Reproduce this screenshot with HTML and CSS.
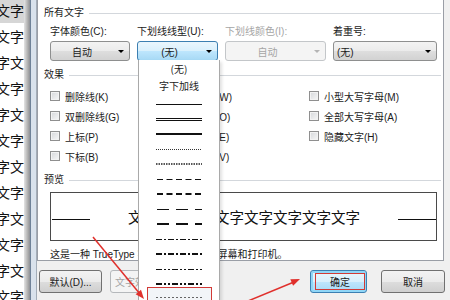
FILE: index.html
```html
<!DOCTYPE html>
<html lang="zh-CN">
<head>
  <meta charset="UTF-8" />
  <title>字体</title>
  <link rel="stylesheet" href="styles.css">
</head>
<body>
  <div class="screen">
    <div class="doc">
      <div class="row">文字文</div>
      <div class="row">文字文</div>
      <div class="row">字文字</div>
      <div class="row">文字文</div>
      <div class="row">字文字</div>
      <div class="row">文字文</div>
      <div class="row">字文字</div>
      <div class="row">文字文</div>
      <div class="row">字文字</div>
      <div class="row">文字文</div>
      <div class="row">字文字</div>
      <div class="row">文字文</div>
    </div>
    <div class="edge"></div>
    <div class="frame"></div>

    <div class="client">
      <div class="page">
        <div class="title">所有文字</div>
        <div class="fields">
          <div class="field">
            <label>字体颜色(C):</label>
            <div class="combo"><span class="val">自动</span><span class="arr"></span></div>
          </div>
          <div class="field">
            <label>下划线线型(U):</label>
            <div class="combo focus">
              <span class="val">(无)</span><span class="arr"></span>
              <!-- 展开的下拉列表 -->
              <ul class="dropdown">
                <li class="dd-text">(无)</li>
                <li class="dd-text">字下加线</li>
                <li class="dd-line"><svg width="46" height="4"><line x1="0" y1="2.5" x2="46" y2="2.5" stroke="#111" stroke-width="1"/></svg></li>
                <li class="dd-line"><svg width="46" height="4"><line x1="0" y1="1.5" x2="46" y2="1.5" stroke="#111" stroke-width="1"/><line x1="0" y1="3.5" x2="46" y2="3.5" stroke="#111" stroke-width="1"/></svg></li>
                <li class="dd-line"><svg width="46" height="4"><line x1="0" y1="2" x2="46" y2="2" stroke="#111" stroke-width="2"/></svg></li>
                <li class="dd-line"><svg width="46" height="4"><line x1="0" y1="2.5" x2="46" y2="2.5" stroke="#333" stroke-width="1" stroke-dasharray="1 1"/></svg></li>
                <li class="dd-line"><svg width="46" height="4"><line x1="0" y1="2" x2="46" y2="2" stroke="#222" stroke-width="1.6" stroke-dasharray="1.5 1"/></svg></li>
                <li class="dd-line"><svg width="46" height="4"><line x1="1" y1="2.5" x2="46" y2="2.5" stroke="#111" stroke-width="1" stroke-dasharray="6 3.5"/></svg></li>
                <li class="dd-line"><svg width="46" height="4"><line x1="1" y1="2" x2="46" y2="2" stroke="#111" stroke-width="2" stroke-dasharray="6 3.5"/></svg></li>
                <li class="dd-line"><svg width="46" height="4"><line x1="1" y1="2.5" x2="46" y2="2.5" stroke="#111" stroke-width="1" stroke-dasharray="12 7"/></svg></li>
                <li class="dd-line"><svg width="46" height="4"><line x1="1" y1="2" x2="46" y2="2" stroke="#111" stroke-width="2" stroke-dasharray="12 7"/></svg></li>
                <li class="dd-line"><svg width="46" height="4"><line x1="0" y1="2.5" x2="46" y2="2.5" stroke="#111" stroke-width="1" stroke-dasharray="6 2 2 2"/></svg></li>
                <li class="dd-line"><svg width="46" height="4"><line x1="0" y1="2" x2="46" y2="2" stroke="#111" stroke-width="2" stroke-dasharray="6 2 2 2"/></svg></li>
                <li class="dd-line"><svg width="46" height="4"><line x1="0" y1="2.5" x2="46" y2="2.5" stroke="#111" stroke-width="1" stroke-dasharray="6 2 2 2 2 2"/></svg></li>
                <li class="dd-line"><svg width="46" height="4"><line x1="0" y1="2" x2="46" y2="2" stroke="#111" stroke-width="2" stroke-dasharray="6 2 2 2 2 2"/></svg></li>
                <li class="dd-sel">
                  <div class="mark"><svg width="46" height="4"><line x1="0" y1="2.5" x2="46" y2="2.5" stroke="#666" stroke-width="1" stroke-dasharray="2 2"/></svg></div>
                </li>
              </ul>
            </div>
          </div>
          <div class="field disabled">
            <label>下划线颜色(I):</label>
            <div class="combo"><span class="val">自动</span><span class="arr"></span></div>
          </div>
          <div class="field">
            <label>着重号:</label>
            <div class="combo left"><span class="val">(无)</span><span class="arr"></span></div>
          </div>
        </div>

        <div class="title">效果</div>
        <div class="effects">
          <div class="check"><span class="box"></span>删除线(K)</div>
          <div class="check"><span class="box"></span>阴影(W)</div>
          <div class="check"><span class="box"></span>小型大写字母(M)</div>
          <div class="check"><span class="box"></span>双删除线(G)</div>
          <div class="check"><span class="box"></span>空心(O)</div>
          <div class="check"><span class="box"></span>全部大写字母(A)</div>
          <div class="check"><span class="box"></span>上标(P)</div>
          <div class="check"><span class="box"></span>阳文(E)</div>
          <div class="check"><span class="box"></span>隐藏文字(H)</div>
          <div class="check"><span class="box"></span>下标(B)</div>
          <div class="check"><span class="box"></span>阴文(V)</div>
        </div>

        <div class="title">预览</div>
        <div class="preview">
          <span class="pv-line"></span>
          <span class="pv-text">文字文字文字文字文字文字文字文字</span>
          <span class="pv-line"></span>
        </div>
        <p class="note">这是一种 TrueType 字体，同时适用于屏幕和打印机。</p>
      </div>

      <div class="buttons">
        <button class="btn wide">默认(D)...</button>
        <button class="btn off">文字效果(E)...</button>
        <button class="btn ok"><span class="mark-ok">确定</span></button>
        <button class="btn cancel">取消</button>
      </div>
    </div>
  </div>

  <!-- 标注箭头 -->
  <svg class="arrows" width="450" height="300">
    <line x1="93" y1="237" x2="140" y2="294" stroke="#e0302c" stroke-width="1.5"/>
    <polygon points="144,299 135.6,294.2 141,289.8" fill="#e0302c"/>
    <line x1="248" y1="301" x2="294" y2="282" stroke="#e0302c" stroke-width="1.5"/>
    <polygon points="300,279 293.1,285.7 290.3,279.3" fill="#e0302c"/>
  </svg>
</body>
</html>
```

FILE: styles.css
```css
body {
  margin: 0;
  width: 450px;
  height: 300px;
  overflow: hidden;
  position: relative;
  font-family: "Liberation Sans", "Noto Sans CJK SC", sans-serif;
  font-size: 10px;
  color: #1a1a1a;
  background: #fff;
}

.screen {
  display: flex;
  height: 300px;
}

/* 左边的文档 */
.doc {
  width: 24px;
  overflow: hidden;
  font-family: "Noto Sans CJK SC", sans-serif;
  font-size: 14px;
  line-height: 26px;
  color: #111;
}

.doc .row {
  white-space: nowrap;
  text-indent: -4px;
}

.doc .row:first-child {
  margin-top: -3px;
  background: #d6d6d6;
}

.edge {
  width: 6px;
  background: linear-gradient(to right, #e4e4e4, #a9a9a9 70%, #8d9096);
}

.frame {
  width: 5px;
  border-left: 1px solid #6f8298;
  border-right: 1px solid #a3adb8;
  background: #d9e2ec;
}

/* 对话框 */
.client {
  flex: 1;
  min-width: 0;
  background: #f0f0f0;
  display: flex;
  flex-direction: column;
}

.page {
  height: 261px;
  box-sizing: border-box;
  background: #fff;
  border: 1px solid #9a9ea6;
  border-top: 0;
  margin-right: 6px;
  padding: 6px 2px 0 6px;
}

.title {
  display: flex;
  align-items: center;
  gap: 5px;
  height: 14px;
  line-height: 14px;
  margin-top: 7px;
}

.title:first-child {
  margin-top: 0;
}

.title::after {
  content: "";
  flex: 1;
  height: 1px;
  background: #d3d7dc;
}

.fields {
  display: grid;
  grid-template-columns: 80px 81px 101px 104px;
  column-gap: 7px;
  margin: 5px 0 0 6px;
}

.field label {
  display: block;
  height: 14px;
  line-height: 14px;
  white-space: nowrap;
}

.combo {
  position: relative;
  margin-top: 2px;
  height: 20px;
  box-sizing: border-box;
  border: 1px solid #8e8f8f;
  border-radius: 3px;
  background: linear-gradient(#f3f3f3 0, #ebebeb 50%, #dedede 51%, #d2d2d2 100%);
  display: flex;
  align-items: center;
}

.combo .val {
  flex: 1;
  text-align: center;
}

.combo.left .val {
  text-align: left;
  padding-left: 3px;
}

.combo .arr {
  width: 16px;
  display: flex;
  justify-content: center;
}

.combo .arr::before {
  content: "";
  border-left: 3px solid transparent;
  border-right: 3px solid transparent;
  border-top: 3px solid #000;
}

.combo.focus {
  border-color: #3c7fb1;
  background: linear-gradient(#eaf6fd 0, #d9f0fc 50%, #bee6fd 51%, #a7d9f5 100%);
}

.disabled label,
.disabled .val {
  color: #a5a5a5;
}

.disabled .combo {
  border-color: #c3c6c9;
  background: #f4f4f4;
}

.disabled .combo .arr::before {
  border-top-color: #b4b4b4;
}

/* 下拉列表 */
.dropdown {
  position: absolute;
  top: 100%;
  left: 0;
  z-index: 5;
  width: 82px;
  height: 250px;
  margin: 0;
  padding: 0;
  list-style: none;
  box-sizing: border-box;
  background: #fff;
  border: 1px solid #a9a9a9;
  border-top: 0;
  box-shadow: 2px 2px 3px rgba(0,0,0,0.12);
  color: #1a1a1a;
}

.dd-text {
  height: 17px;
  line-height: 17px;
  text-align: center;
  font-family: "Noto Sans CJK SC", sans-serif;
}

.dd-line {
  height: 15px;
  box-sizing: border-box;
  padding-top: 8px;
  display: flex;
  justify-content: center;
}

.dd-line svg,
.dd-sel svg {
  display: block;
}

.dd-sel .mark {
  width: 65px;
  height: 20px;
  margin: -2px auto 0;
  box-sizing: border-box;
  border: 1px solid #d23a36;
  background: #f2f5f8;
  display: flex;
  justify-content: center;
  padding-top: 7px;
}

/* 效果 */
.effects {
  display: grid;
  grid-template-columns: 131px 128px auto;
  grid-auto-rows: 20px;
  margin: 4px 0 0 6px;
}

.check {
  display: flex;
  align-items: center;
  gap: 5px;
  white-space: nowrap;
}

.box {
  width: 10px;
  height: 10px;
  box-sizing: border-box;
  border: 1px solid #8f8f8f;
  background: linear-gradient(135deg, #d5d7da, #f7f7f7);
  box-shadow: inset 0 0 0 1px #f2f2f2;
}

/* 预览 */
.preview {
  height: 49px;
  box-sizing: border-box;
  margin: 5px 4px 0 6px;
  border: 1px solid #4a4a4a;
  display: flex;
  align-items: center;
}

.pv-line {
  width: 38px;
  height: 1px;
  margin-top: 6px;
  background: #111;
}

.pv-line:first-child {
  margin-left: 1px;
}

.pv-text {
  flex: 1;
  text-align: center;
  white-space: nowrap;
  font-family: "Noto Sans CJK SC", sans-serif;
  font-size: 14.5px;
  line-height: 20px;
  color: #111;
}

.note {
  margin: 7px 0 0 6px;
  line-height: 14px;
  white-space: nowrap;
}

/* 按钮 */
.buttons {
  display: flex;
  align-items: flex-start;
  gap: 8px;
  padding: 9px 5px 0 2px;
}

.btn {
  height: 23px;
  padding: 0 4px;
  box-sizing: border-box;
  font: inherit;
  color: #1a1a1a;
  border: 1px solid #707070;
  border-radius: 3px;
  background: linear-gradient(#f2f2f2 0, #ebebeb 50%, #dddddd 51%, #cfcfcf 100%);
  display: flex;
  align-items: center;
  justify-content: center;
  white-space: nowrap;
}

.btn.wide {
  width: 63px;
}

.btn.off {
  color: #a5a5a5;
  border-color: #b5b8bb;
  background: #f4f4f4;
}

.btn.ok {
  width: 57px;
  margin-left: auto;
  padding: 0;
  align-items: stretch;
  border-color: #3c7fb1;
  box-shadow: inset 0 0 0 2px #8fd6f7;
  background: linear-gradient(#eaf6fd 0, #d9f0fc 50%, #bee6fd 51%, #a7d9f5 100%);
}

.mark-ok {
  flex: 1;
  margin: 2px 1px 2px 4px;
  border: 1px solid #d23a36;
  display: flex;
  align-items: center;
  justify-content: center;
}

.btn.cancel {
  width: 64px;
  margin-left: 6px;
}

.arrows {
  position: absolute;
  top: 0;
  left: 0;
  z-index: 10;
  pointer-events: none;
}
```
